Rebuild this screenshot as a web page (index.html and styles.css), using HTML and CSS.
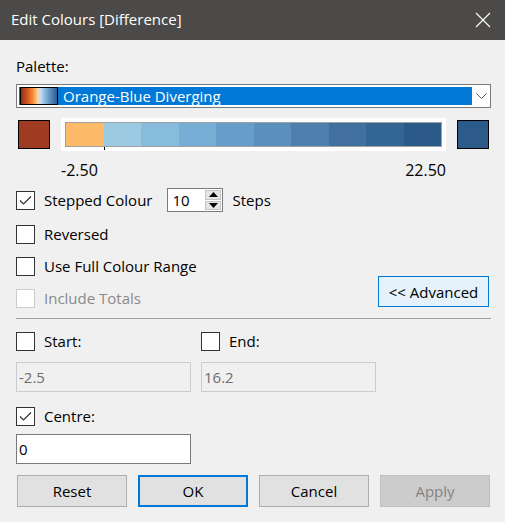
FILE: index.html
```html
<!DOCTYPE html>
<html>
<head>
<meta charset="utf-8">
<link rel="stylesheet" href="styles.css">
</head>
<body>
<div class="dialog">
  <div class="titlebar">
    <span class="title">Edit Colours [Difference]</span>
    <svg class="close" width="16" height="16" viewBox="0 0 16 16"><path d="M1 1 L15 15 M15 1 L1 15" stroke="#fff" stroke-width="1.1" fill="none"/></svg>
  </div>
  <div class="content">
    <div class="label palette-label">Palette:</div>
    <div class="combo">
      <div class="combo-value">
        <span class="palette-icon"></span>
        <span class="combo-text">Orange-Blue Diverging</span>
      </div>
      <div class="combo-arrow">
        <svg width="11" height="6" viewBox="0 0 11 6"><path d="M0.5 0.5 L5.5 5.5 L10.5 0.5" stroke="#606060" stroke-width="1" fill="none"/></svg>
      </div>
    </div>
    <div class="ramp-row">
      <div class="swatch swatch-start"></div>
      <div class="bar-frame">
        <div class="bar">
          <span class="seg" style="background:#fdbb69"></span>
          <span class="seg" style="background:#9ccae3"></span>
          <span class="seg" style="background:#88bcdd"></span>
          <span class="seg" style="background:#77aed5"></span>
          <span class="seg" style="background:#679dca"></span>
          <span class="seg" style="background:#5b8fbe"></span>
          <span class="seg" style="background:#4e7fae"></span>
          <span class="seg" style="background:#41709f"></span>
          <span class="seg" style="background:#336595"></span>
          <span class="seg" style="background:#2b5a89"></span>
          <span class="tick"></span>
        </div>
      </div>
      <div class="swatch swatch-end"></div>
    </div>
    <div class="range-labels"><span>-2.50</span><span>22.50</span></div>

    <div class="options">
      <div class="option-list">
        <div class="check-row stepped-row">
          <span class="checkbox"><svg width="17" height="17" viewBox="0 0 17 17"><path d="M3 8.5 L6.5 12 L14 4.5" stroke="#333" stroke-width="1.2" fill="none"/></svg></span>
          <span class="check-label">Stepped Colour</span>
          <div class="spin">
            <span class="spin-value">10</span>
            <div class="spin-buttons">
              <span class="spin-btn"><svg width="9" height="5" viewBox="0 0 9 5"><path d="M0 5 L4.5 0 L9 5 Z" fill="#000"/></svg></span>
              <span class="spin-btn"><svg width="9" height="5" viewBox="0 0 9 5"><path d="M0 0 L4.5 5 L9 0 Z" fill="#000"/></svg></span>
            </div>
          </div>
          <span class="steps-label">Steps</span>
        </div>
        <div class="check-row">
          <span class="checkbox"></span>
          <span class="check-label">Reversed</span>
        </div>
        <div class="check-row">
          <span class="checkbox"></span>
          <span class="check-label">Use Full Colour Range</span>
        </div>
        <div class="check-row disabled">
          <span class="checkbox"></span>
          <span class="check-label">Include Totals</span>
        </div>
      </div>
      <button class="advanced">&lt;&lt; Advanced</button>
    </div>

    <div class="separator"></div>

    <div class="range-grid">
      <div class="check-row">
        <span class="checkbox"></span>
        <span class="check-label">Start:</span>
      </div>
      <div class="check-row">
        <span class="checkbox"></span>
        <span class="check-label">End:</span>
      </div>
      <div class="textbox disabled-box">-2.5</div>
      <div class="textbox disabled-box">16.2</div>
    </div>

    <div class="check-row centre-row">
      <span class="checkbox"><svg width="17" height="17" viewBox="0 0 17 17"><path d="M3 8.5 L6.5 12 L14 4.5" stroke="#333" stroke-width="1.2" fill="none"/></svg></span>
      <span class="check-label">Centre:</span>
    </div>
    <div class="textbox centre-box">0</div>

    <div class="buttons">
      <button class="btn">Reset</button>
      <button class="btn btn-default">OK</button>
      <button class="btn">Cancel</button>
      <button class="btn btn-disabled">Apply</button>
    </div>
  </div>
</div>
</body>
</html>
```

FILE: styles.css
```css
* { box-sizing: border-box; }
html, body { margin: 0; padding: 0; }
body {
  width: 505px;
  height: 522px;
  background: #f0f0f0;
  font-family: "Open Sans", "Noto Sans", sans-serif;
  font-size: 15px;
  color: #000;
  overflow: hidden;
}
.dialog { width: 505px; height: 522px; background: #f0f0f0; }

.titlebar {
  height: 40px;
  background: #4b4a48;
  display: flex;
  align-items: center;
  justify-content: space-between;
  padding: 0 14px 2px 11px;
}
.title { color: #fff; font-size: 15px; line-height: 20px; }
.close { display: block; margin-top: 2px; }

.content { padding: 0 14px 0 16px; }

.label { line-height: 20px; }
.palette-label { padding-top: 16px; }

.combo {
  margin-top: 8px;
  height: 24px;
  border: 1px solid #7a7a7a;
  background: #fff;
  padding: 2px;
  display: flex;
}
.combo-value {
  flex: 1;
  background: #0078d7;
  display: flex;
  align-items: center;
  color: #fff;
}
.palette-icon {
  width: 38px;
  height: 18px;
  margin-left: 1px;
  border: 1px solid #000;
  background: linear-gradient(90deg, #8f3114 0%, #d9551e 18%, #f7923a 34%, #fdd3a0 46%, #c6dfee 54%, #8dbbdc 66%, #5a8dbd 82%, #2b5c8a 100%);
}
.combo-text { margin-left: 5px; line-height: 18px; }
.combo-arrow {
  width: 16px;
  display: flex;
  align-items: center;
  justify-content: center;
  padding-left: 2px;
}
.combo-arrow svg { display: block; }

.ramp-row {
  margin-top: 10px;
  height: 33px;
  display: flex;
  align-items: center;
}
.swatch {
  width: 32px;
  height: 29px;
  border: 1px solid #000;
}
.swatch-start { margin-left: 2px; background: #9e3b20; }
.swatch-end { margin-left: 11px; background: #2c5b8a; }
.bar-frame {
  margin-left: 11px;
  width: 385px;
  height: 33px;
  background: #fff;
  padding: 4px;
}
.bar {
  position: relative;
  height: 25px;
  border: 1px solid #a0a0a0;
  display: flex;
}
.seg { flex: 1; }
.tick {
  position: absolute;
  left: 38px;
  bottom: -4px;
  width: 1px;
  height: 3px;
  background: #000;
}

.range-labels {
  margin: 9px 45px 0 45px;
  display: flex;
  justify-content: space-between;
  line-height: 20px;
  font-size: 16px;
}

.options {
  margin-top: 8px;
  display: flex;
  justify-content: space-between;
  align-items: flex-end;
}
.option-list { display: flex; flex-direction: column; }
.check-row {
  display: flex;
  align-items: center;
  height: 20px;
  margin-top: 12px;
  line-height: 20px;
}
.stepped-row { height: 24px; margin-top: 0; }
.checkbox {
  width: 19px;
  height: 19px;
  border: 1px solid #333;
  background: #fff;
  display: flex;
  align-items: center;
  justify-content: center;
  flex: none;
}
.checkbox svg { display: block; }
.check-label { margin-left: 9px; white-space: nowrap; }
.disabled .checkbox { border-color: #cccccc; }
.disabled .check-label { color: #8a8a8a; }

.spin {
  margin-left: 15px;
  width: 56px;
  height: 24px;
  border: 1px solid #7a7a7a;
  background: #fff;
  display: flex;
  padding: 1px;
}
.spin-value { flex: 1; padding-left: 3px; line-height: 20px; }
.spin-buttons {
  width: 16px;
  display: flex;
  flex-direction: column;
  gap: 1px;
}
.spin-btn {
  flex: 1;
  background: #e6e6e6;
  border: 1px solid #c4c4c4;
  display: flex;
  align-items: center;
  justify-content: center;
}
.spin-btn svg { display: block; }
.steps-label { margin-left: 9px; }

.advanced {
  width: 111px;
  height: 31px;
  margin-bottom: 1px;
  margin-right: 2px;
  border: 1px solid #0078d7;
  background: #e5f1fb;
  font-family: inherit;
  font-size: 15px;
  color: #000;
  padding: 0;
}

.separator {
  margin-top: 10px;
  height: 1px;
  background: #a0a0a0;
}

.range-grid {
  display: grid;
  grid-template-columns: 175px 175px;
  column-gap: 10px;
}
.range-grid .check-row { margin-top: 12px; }
.textbox {
  height: 30px;
  border: 1px solid #7a7a7a;
  background: #fff;
  padding-left: 2px;
  line-height: 28px;
  width: 175px;
}
.range-grid .textbox { margin-top: 11px; }
.disabled-box {
  background: #f0f0f0;
  border-color: #cccccc;
  color: #6d6d6d;
}
.centre-row { margin-top: 14px; }
.centre-box { margin-top: 8px; }

.buttons {
  margin-top: 11px;
  margin-left: 1px;
  display: flex;
  gap: 11px;
}
.btn {
  width: 110px;
  height: 32px;
  background: #e1e1e1;
  border: 1px solid #adadad;
  font-family: inherit;
  font-size: 15px;
  color: #000;
  padding: 0;
}
.btn-default { border: 2px solid #0078d7; }
.btn-disabled {
  background: #cccccc;
  border-color: #bfbfbf;
  color: #838383;
}
```
